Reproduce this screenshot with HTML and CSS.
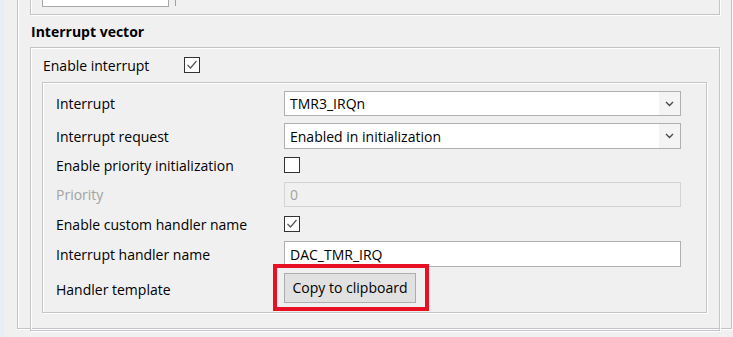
FILE: index.html
```html
<!DOCTYPE html>
<html lang="en">
  <head>
    <meta charset="utf-8" />
    <title>Interrupt vector</title>
    <link rel="stylesheet" href="styles.css">
  </head>
  <body>
    <div class="edge"></div>
    <div class="page">
      <div class="frame outer">
        <div class="frame top-box">
          <div class="top-field"></div>
          <div class="top-sep"></div>
          <div class="top-field-right"></div>
        </div>

        <h5 class="group-title">Interrupt vector</h5>
        <div class="frame group">
          <div class="row enable-row">
            <span class="label">Enable interrupt</span>
            <span class="check checked">
              <svg width="14" height="14" viewBox="0 0 14 14"><polyline points="2.5,7 5.5,10 11.5,3" fill="none" stroke="#555" stroke-width="1.2"/></svg>
            </span>
          </div>

          <div class="frame inner">
            <div class="row r-combo1">
              <span class="label">Interrupt</span>
              <div class="combo">
                <span class="value">TMR3_IRQn</span>
                <span class="arrow"><svg width="9" height="6" viewBox="0 0 9 6"><polyline points="1,1 4.5,4.5 8,1" fill="none" stroke="#444" stroke-width="1.3"/></svg></span>
              </div>
            </div>
            <div class="row r-combo2">
              <span class="label">Interrupt request</span>
              <div class="combo">
                <span class="value">Enabled in initialization</span>
                <span class="arrow"><svg width="9" height="6" viewBox="0 0 9 6"><polyline points="1,1 4.5,4.5 8,1" fill="none" stroke="#444" stroke-width="1.3"/></svg></span>
              </div>
            </div>
            <div class="row r-check">
              <span class="label">Enable priority initialization</span>
              <span class="check"></span>
            </div>
            <div class="row r-field">
              <span class="label disabled">Priority</span>
              <div class="field is-disabled"><span class="value">0</span></div>
            </div>
            <div class="row r-check">
              <span class="label">Enable custom handler name</span>
              <span class="check checked">
                <svg width="14" height="14" viewBox="0 0 14 14"><polyline points="2.5,7 5.5,10 11.5,3" fill="none" stroke="#555" stroke-width="1.2"/></svg>
              </span>
            </div>
            <div class="row r-name">
              <span class="label">Interrupt handler name</span>
              <div class="field"><span class="value">DAC_TMR_IRQ</span></div>
            </div>
            <div class="row r-button">
              <span class="label">Handler template</span>
              <div class="highlight">
                <button class="btn">Copy to clipboard</button>
              </div>
            </div>
          </div>
        </div>
      </div>
    </div>
    <div class="edge-right"></div>
  </body>
</html>
```

FILE: styles.css
```css
body{
  margin: 0;
  width: 733px;
  height: 337px;
  overflow: hidden;
  background: #f0f0f0;
  font-family: 'Open Sans', 'Noto Sans', sans-serif;
  font-size: 14px;
  color: #000;
  display: flex;
}
.edge{
  width: 4px;
  background: #e9edf6;
  flex: none;
}
.edge-right{
  width: 3px;
  margin-left: 8px;
  border-left: 1px solid #fafafa;
  background: #e9edf6;
  flex: none;
}
.page{
  padding-left: 13px;
  flex: none;
}
.frame{
  border: 1px solid #c4c4c8;
  box-shadow: inset 1px 1px 0 #fff, 1px 1px 0 #fff;
}
.outer{
  width: 690px;
  margin-top: -40px;
  height: 367px;
  padding: 0 11px 0 12px;
}
.top-box{
  height: 52px;
  position: relative;
}
.top-field{
  position: absolute;
  left: 11px;
  bottom: 7px;
  width: 125px;
  height: 30px;
  background: #fff;
  border: 1px solid #a8a8a8;
}
.top-sep{
  position: absolute;
  left: 144px;
  bottom: 8px;
  width: 1px;
  height: 30px;
  background: #a0a0a0;
}
.top-field-right{
  position: absolute;
  left: 429px;
  bottom: 14px;
  width: 229px;
  height: 30px;
  border-bottom: 1px solid #b4b4b4;
}
.group-title{
  margin: 0;
  height: 32px;
  line-height: 34px;
  font-size: 14px;
  font-weight: 700;
  padding-left: 1px;
}
.group{
  height: 273px;
  padding: 9px 12px 0 11px;
}
.row{
  display: flex;
  align-items: center;
}
.enable-row{
  height: 16px;
  margin-bottom: 9px;
}
.enable-row .label{
  width: 141px;
  padding-left: 1px;
}
.inner{
  height: 221px;
  padding: 8px 11px 0 12px;
}
.inner .label{
  width: 228px;
  padding-left: 1px;
}
.label{
  white-space: nowrap;
  flex: none;
}
.label.disabled{
  color: #a3a3a3;
}
.r-combo1{ height: 25px; margin-bottom: 7px; }
.r-combo2{ height: 26px; margin-bottom: 8px; }
.r-check{ height: 16px; margin-bottom: 9px; }
.r-field{ height: 25px; margin-bottom: 9px; }
.r-name{ height: 26px; margin-bottom: 7px; }
.r-button{ height: 30px; }

.check{
  width: 14px;
  height: 14px;
  border: 1px solid #333;
  background: #fff;
  display: flex;
  flex: none;
}
.combo, .field{
  width: 397px;
  height: 100%;
  box-sizing: border-box;
  border: 1px solid #b0b0b0;
  background: #fff;
  display: flex;
  align-items: center;
}
.value{
  flex: 1;
  padding-left: 5px;
  white-space: nowrap;
}
.arrow{
  width: 21px;
  height: 100%;
  background: #f4f4f4;
  display: flex;
  align-items: center;
  justify-content: center;
}
.field.is-disabled{
  background: #f0f0f0;
  border-color: #d4d4d4;
  color: #a3a3a3;
}
.highlight{
  margin-left: -11px;
  padding: 5px 9px 4px 7px;
  border: 4px solid #e81123;
  margin-top: -4px;
}
.btn{
  display: block;
  width: 132px;
  height: 30px;
  padding: 0;
  font: inherit;
  color: #000;
  background: #e1e1e1;
  border: 1px solid #adadad;
}
```
